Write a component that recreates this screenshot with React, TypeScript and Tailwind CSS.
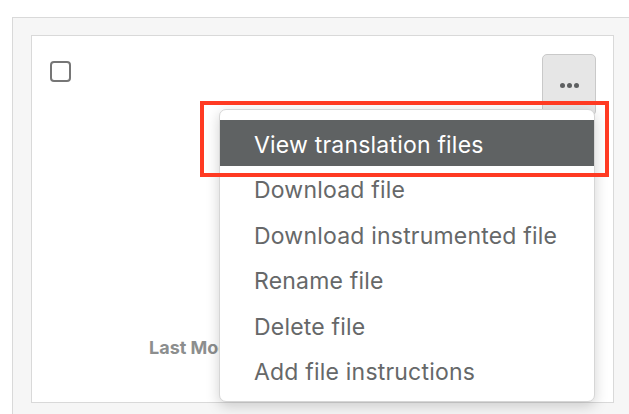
import React from 'react';

const items = [
  'View translation files',
  'Download file',
  'Download instrumented file',
  'Rename file',
  'Delete file',
  'Add file instructions',
];

const App = () => {
  return (
    <div className="h-[414px] w-[629px] overflow-hidden bg-white pl-[12px] pt-[17px] font-['Inter',sans-serif]">
      <div className="h-[420px] w-[640px] border border-[#d9d9d9] bg-[#f6f6f6] pl-[18px] pt-[17px]">
        <div className="relative flex h-[368px] w-[583px] flex-col border border-[#d9d9d9] bg-white">
          <div className="flex items-start justify-between pl-[18px] pr-[17px] pt-[18px]">
            <div className="mt-[7px] h-[21px] w-[21px] rounded-[4px] border-2 border-[#767676]" />
            <div className="flex h-[62px] w-[54px] items-center justify-center rounded-[5px] border border-[#c9c9c9] bg-[#e6e6e6]">
              <div className="flex gap-[2px]">
                <span className="h-[5px] w-[5px] rounded-full bg-[#5e6061]" />
                <span className="h-[5px] w-[5px] rounded-full bg-[#5e6061]" />
                <span className="h-[5px] w-[5px] rounded-full bg-[#5e6061]" />
              </div>
            </div>
          </div>
          <div className="mt-auto pb-[41px] pl-[117px] text-[18px] font-bold text-[#8c8e8e]">
            Last Modified
          </div>

          {/* dropdown menu */}
          <div className="absolute left-[187px] top-[73px] w-[376px] rounded-[7px] border border-[#d6d6d6] bg-white pb-[8px] pt-[10px] shadow-[0_4px_14px_rgba(0,0,0,0.18)]">
            {items.map((label, i) => (
              <div
                key={label}
                className={
                  i === 0
                    ? 'flex h-[45.5px] items-center bg-[#5f6263] pl-[34px] text-[23px] tracking-[0.2px] text-white'
                    : 'flex h-[45.5px] items-center pl-[34px] text-[23px] tracking-[0.2px] text-[#666869]'
                }
              >
                <span className="translate-y-[2px]">{label}</span>
              </div>
            ))}
          </div>

          {/* highlight annotation */}
          <div className="absolute left-[168px] top-[65px] h-[76px] w-[409px] border-[4px] border-[#ff3a22]" />
        </div>
      </div>
    </div>
  );
};

export default App;
